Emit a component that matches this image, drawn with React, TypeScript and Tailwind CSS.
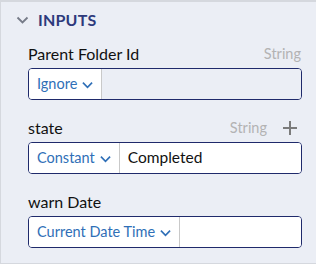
import React from 'react';

function Chevron({ className, width = 1.6 }: { className?: string; width?: number }) {
    return (
        <svg viewBox="0 0 12 8" className={className} fill="none" stroke="currentColor" strokeWidth={width}>
            <path d="M1 1.5 L6 6.5 L11 1.5" />
        </svg>
    );
}

interface FieldProps {
    label: string;
    type?: string;
    plus?: boolean;
    mode: string;
    value?: string;
    disabled?: boolean;
}

function Field({ label, type, plus, mode, value, disabled }: FieldProps) {
    return (
        <div className="flex flex-col">
            <div className="flex items-center justify-between h-[20px] mb-[4px]">
                <span className="text-[16px] text-[#111]">{label}</span>
                <div className="flex items-center gap-[15px]">
                    {type && <span className="text-[14.5px] text-[#b3b3b3] mr-[1px]">{type}</span>}
                    {plus && (
                        <svg viewBox="0 0 14 14" className="w-[14px] h-[14px] mr-[5px] text-[#7b7b7b]" stroke="currentColor" strokeWidth={2}>
                            <path d="M7 0 V14 M0 7 H14" />
                        </svg>
                    )}
                </div>
            </div>
            <div className="flex h-[32px] border border-[#1f2a6b] rounded-[4px] overflow-hidden">
                <div className="flex items-center gap-[5px] pl-[8px] pr-[8px] bg-white border-r border-[#c9c9c9] text-[14.5px] text-[#2f6fb7]">
                    <span>{mode}</span>
                    <Chevron className="w-[11px] h-[8px] mt-[1px]" width={1.8} />
                </div>
                <div className={disabled ? 'flex-1 bg-[#ebeef5]' : 'flex-1 bg-white flex items-center pl-[8px] text-[15.5px] text-[#111]'}>
                    {value}
                </div>
            </div>
        </div>
    );
}

export default function App() {
    return (
        <div className="w-[318px] h-[266px] bg-white" style={{ fontFamily: 'Lato, "Open Sans", sans-serif' }}>
            <div className="w-[316px] h-[264px] bg-[#ebeef5] border-t-2 border-l border-b border-[#d5d8de]">
                <div className="flex items-center h-[36px] pl-[15px] gap-[9px] mb-[6px]">
                    <Chevron className="w-[13px] h-[8px] text-[#767b88]" width={1.8} />
                    <span className="text-[16px] font-bold text-[#2d3a7c] tracking-[0.2px]">INPUTS</span>
                </div>
                <div className="flex flex-col gap-[18px] pl-[27px] pr-[14px]">
                    <Field label="Parent Folder Id" type="String" mode="Ignore" disabled />
                    <Field label="state" type="String" plus mode="Constant" value="Completed" />
                    <Field label="warn Date" mode="Current Date Time" />
                </div>
            </div>
        </div>
    );
}
